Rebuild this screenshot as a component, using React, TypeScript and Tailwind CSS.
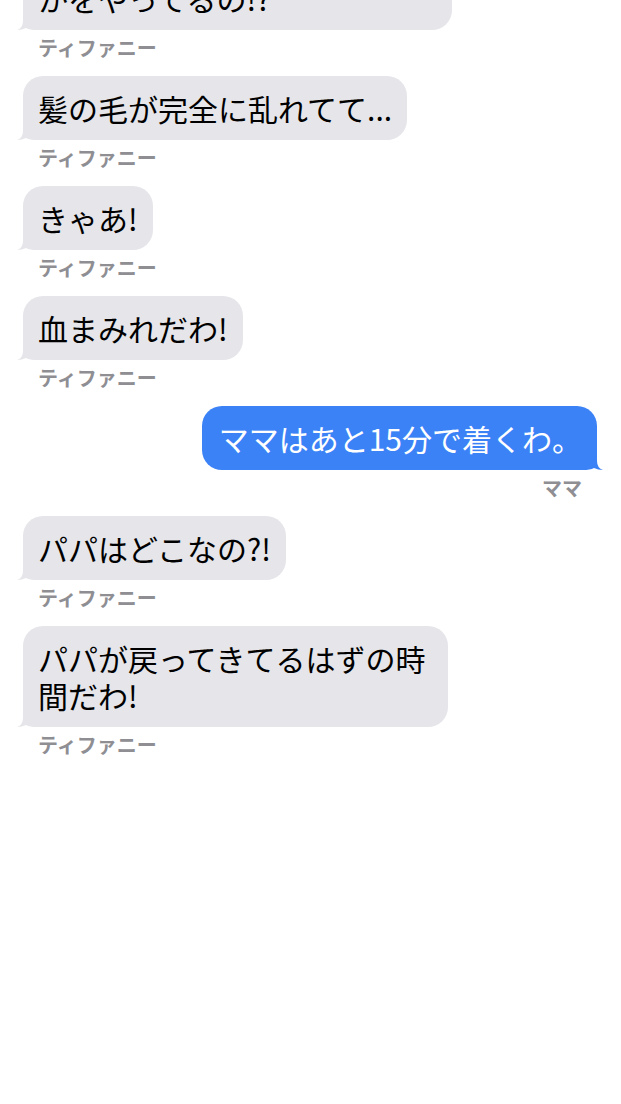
const messages = [
  { from: "them", name: "ティファニー", lines: ["あの人たち、あそこで何", "かをやってるの!?"], w: "w-[429px]" },
  { from: "them", name: "ティファニー", lines: ["髪の毛が完全に乱れてて..."], w: "" },
  { from: "them", name: "ティファニー", lines: ["きゃあ!"], w: "" },
  { from: "them", name: "ティファニー", lines: ["血まみれだわ!"], w: "" },
  { from: "me", name: "ママ", lines: ["ママはあと15分で着くわ。"], w: "" },
  { from: "them", name: "ティファニー", lines: ["パパはどこなの?!"], w: "" },
  { from: "them", name: "ティファニー", lines: ["パパが戻ってきてるはずの時", "間だわ!"], w: "w-[425px]" },
];

function Tail({ mine }: { mine: boolean }) {
  return (
    <svg
      width="26"
      height="22"
      viewBox="0 0 26 22"
      className={
        mine
          ? "absolute bottom-0 right-[-6px] -scale-x-100"
          : "absolute bottom-0 left-[-6px]"
      }
    >
      <path
        d="M6 0 L6 13 Q6 20 0 22 Q5 21.8 9 20 Q13 22 20 22 L26 22 L26 0 Z"
        fill={mine ? "#3b82f6" : "#e5e5ea"}
      />
    </svg>
  );
}

export default function App() {
  return (
    <div
      className="h-[1104px] w-full overflow-hidden bg-white"
      style={{ fontFamily: '"Noto Sans CJK JP", "Noto Sans", sans-serif' }}
    >
      <div className="mt-[-71px] flex flex-col pl-[23px] pr-[24px]">
        {messages.map((m, i) => {
          const mine = m.from === "me";
          return (
            <div
              key={i}
              className={`flex flex-col pb-[16px] ${mine ? "items-end" : "items-start"}`}
            >
              <div
                className={`relative rounded-[20px] px-[15px] py-[13.5px] text-[30px] leading-[37px] whitespace-nowrap ${m.w} ${
                  mine ? "bg-[#3b82f6] pl-[17px] text-white" : "bg-[#e5e5ea] text-black"
                }`}
              >
                <Tail mine={mine} />
                <span className="relative">
                  {m.lines.map((l, j) => (
                    <span key={j} className="block">
                      {l}
                    </span>
                  ))}
                </span>
              </div>
              <div className="mt-[6px] px-[15px] text-[20px] leading-[24px] font-semibold text-[#8e8e93]">
                {m.name}
              </div>
            </div>
          );
        })}
      </div>
    </div>
  );
}
